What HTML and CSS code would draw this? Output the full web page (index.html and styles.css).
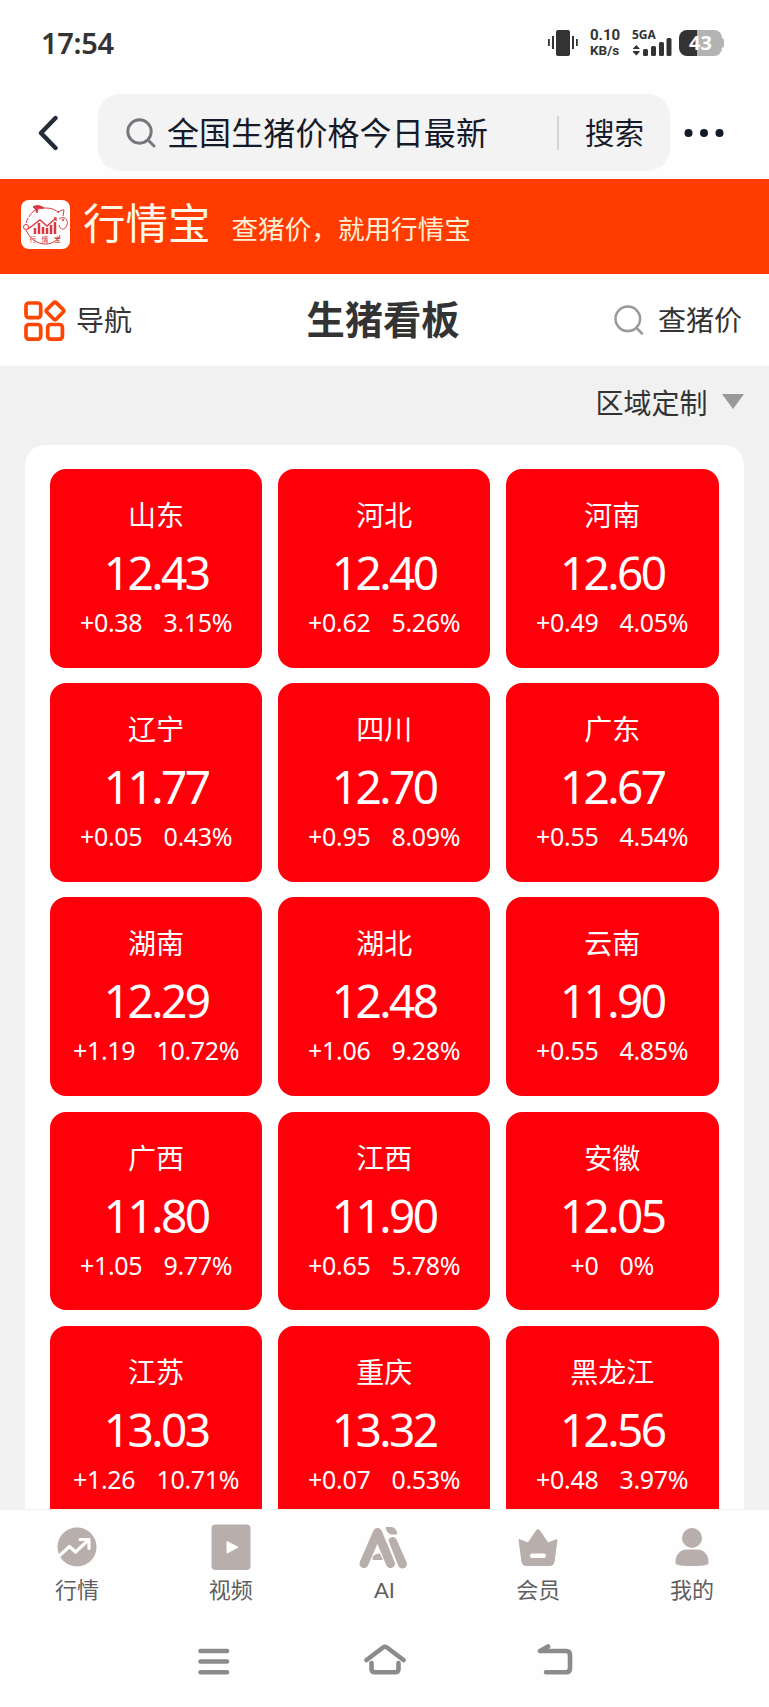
FILE: index.html
```html
<!DOCTYPE html>
<html lang="zh-CN">
<head>
  <meta charset="UTF-8" />
  <meta name="viewport" content="width=device-width, initial-scale=1.0"/>
  <title>生猪看板</title>
  <link rel="stylesheet" href="styles.css">
</head>
<body>
  <div class="status-bar">
    <span class="time">17:54</span>
    <svg class="vibrate" width="30" height="26" viewBox="0 0 30 26" fill="#333">
      <rect x="8" y="0" width="14" height="26" rx="2"/>
      <rect x="0" y="9" width="1.8" height="7"/><rect x="4" y="6" width="2" height="13"/>
      <rect x="24" y="6" width="2" height="13"/><rect x="28" y="9" width="1.8" height="7"/>
    </svg>
    <div class="speed"><span class="speed-num">0.10</span><span class="speed-unit">KB/s</span></div>
    <div class="signal">
      <span>5GA</span>
      <svg width="40" height="18" viewBox="0 0 40 18" fill="#333">
        <path d="M1 8 L4.3 4.5 L7.6 8 V8.6 H1Z M1 10.6 H7.6 V11.5 L4.3 15 L1 11.5Z" transform="translate(0 2.5)"/>
        <rect x="11" y="11" width="5" height="7" rx="1.5"/><rect x="19" y="8" width="5" height="10" rx="1.5"/>
        <rect x="27" y="4" width="5" height="14" rx="1.5"/><rect x="34.500" y="0" width="5" height="18" rx="1.5"/>
      </svg>
    </div>
    <div class="battery"><span>43</span></div>
  </div>

  <div class="search-bar">
    <svg class="back" width="20" height="36" viewBox="0 0 20 36" fill="none" stroke="#242c3a" stroke-width="4.4" stroke-linecap="round" stroke-linejoin="round"><path d="M17.500 3 L3 18 L17.500 33"/></svg>
    <div class="search-box">
      <svg class="search-icon" width="30" height="30" viewBox="0 0 30 30" fill="none" stroke="#75777d" stroke-width="2.9" stroke-linecap="round"><circle cx="13.500" cy="13.500" r="11.700"/><path d="M22 22 L28 28"/></svg>
      <span class="keyword">全国生猪价格今日最新</span>
      <span class="divider"></span>
      <span class="search-btn">搜索</span>
    </div>
    <svg class="more" width="40" height="10" viewBox="0 0 40 10" fill="#151a28"><circle cx="4.500" cy="5" r="4"/><circle cx="20" cy="5" r="4"/><circle cx="35.500" cy="5" r="4"/></svg>
  </div>

  <div class="banner">
    <div class="logo">
      <svg width="49" height="49" viewBox="0 0 49 49" fill="none" stroke="#db3941" stroke-width="1">
        <path d="M8 17 C11 10 18 8 25 8 C31 8 35 10 38 13 M5 30 C9 39 16 44 25 44 C32 44 38 39 39 35 M7 18 L5 23"/>
        <path d="M12 7 C15 5 19 5 23 8 L17 8 L16 13 C15 10 14 8 12 7Z" fill="#db3941"/>
        <path d="M36 12 C39 12 41 9 43 10 L42 16 M38 19 C43 15 48 20 46 25 C44 31 39 30 38 25"/>
        <circle cx="42" cy="20" r=".8"/><circle cx="5" cy="27" r="2.500"/>
        <path d="M7 29 L19 20 L26 26 L35 18 M33 18 H35 V21" stroke-width="1.400"/>
        <path d="M14 34 V28 M18 34 V23 M22 34 V27 M26 34 V28 M30 34 V25 M34 34 V22" stroke-width="2.500"/>
        <text x="8.500" y="41.500" class="logo-text">行</text><text x="20.500" y="41.500" class="logo-text">情</text><text x="33" y="41.500" class="logo-text">宝</text>
      </svg>
    </div>
    <span class="brand">行情宝</span>
    <span class="slogan">查猪价，就用行情宝</span>
  </div>

  <div class="nav">
    <div class="nav-left">
      <svg width="42" height="41" viewBox="0 0 42 41" fill="none" stroke="#ff4600" stroke-width="3.700">
        <rect x="2" y="3" width="14.700" height="14.700" rx="3"/>
        <rect x="2" y="24.500" width="14.700" height="14.700" rx="3"/>
        <rect x="23.700" y="24.500" width="14.700" height="14.700" rx="3"/>
        <rect x="24.300" y="4.200" width="13.400" height="13.400" rx="2" transform="rotate(45 31 10.900)"/>
      </svg>
      <span>导航</span>
    </div>
    <h1>生猪看板</h1>
    <div class="nav-right">
      <svg width="30" height="30" viewBox="0 0 30 30" fill="none" stroke="#999" stroke-width="2.500" stroke-linecap="round"><circle cx="13.800" cy="13.800" r="12.300"/><path d="M22.500 23 L28 28.500"/></svg>
      <span>查猪价</span>
    </div>
  </div>

  <div class="board">
    <div class="region">
      <span>区域定制</span>
      <i class="arrow"></i>
    </div>
    <div class="cards">
      <div class="card"><p class="name">山东</p><p class="price">12.43</p><p class="change"><span>+0.38</span><span>3.15%</span></p></div>
      <div class="card"><p class="name">河北</p><p class="price">12.40</p><p class="change"><span>+0.62</span><span>5.26%</span></p></div>
      <div class="card"><p class="name">河南</p><p class="price">12.60</p><p class="change"><span>+0.49</span><span>4.05%</span></p></div>
      <div class="card"><p class="name">辽宁</p><p class="price">11.77</p><p class="change"><span>+0.05</span><span>0.43%</span></p></div>
      <div class="card"><p class="name">四川</p><p class="price">12.70</p><p class="change"><span>+0.95</span><span>8.09%</span></p></div>
      <div class="card"><p class="name">广东</p><p class="price">12.67</p><p class="change"><span>+0.55</span><span>4.54%</span></p></div>
      <div class="card"><p class="name">湖南</p><p class="price">12.29</p><p class="change"><span>+1.19</span><span>10.72%</span></p></div>
      <div class="card"><p class="name">湖北</p><p class="price">12.48</p><p class="change"><span>+1.06</span><span>9.28%</span></p></div>
      <div class="card"><p class="name">云南</p><p class="price">11.90</p><p class="change"><span>+0.55</span><span>4.85%</span></p></div>
      <div class="card"><p class="name">广西</p><p class="price">11.80</p><p class="change"><span>+1.05</span><span>9.77%</span></p></div>
      <div class="card"><p class="name">江西</p><p class="price">11.90</p><p class="change"><span>+0.65</span><span>5.78%</span></p></div>
      <div class="card"><p class="name">安徽</p><p class="price">12.05</p><p class="change"><span>+0</span><span>0%</span></p></div>
      <div class="card"><p class="name">江苏</p><p class="price">13.03</p><p class="change"><span>+1.26</span><span>10.71%</span></p></div>
      <div class="card"><p class="name">重庆</p><p class="price">13.32</p><p class="change"><span>+0.07</span><span>0.53%</span></p></div>
      <div class="card"><p class="name">黑龙江</p><p class="price">12.56</p><p class="change"><span>+0.48</span><span>3.97%</span></p></div>
    </div>
  </div>

  <div class="tabs">
    <div class="tab">
      <svg width="50" height="46" viewBox="0 0 50 46"><circle cx="25" cy="23" r="19.500" fill="#b8aeab"/><path d="M6 33 L17.500 22.500 L23.500 28 L37 15.500 M28 15.500 H37 V24.500" fill="none" stroke="#fff" stroke-width="3.200" stroke-linecap="round" stroke-linejoin="round"/></svg>
      <span>行情</span>
    </div>
    <div class="tab">
      <svg width="50" height="46" viewBox="0 0 50 46"><rect x="5.500" y="0.500" width="39" height="45.500" rx="4" fill="#b8aeab"/><path d="M21 17.500 L32 23.300 L21 29Z" fill="#fff" stroke="#fff" stroke-linejoin="round"/></svg>
      <span>视频</span>
    </div>
    <div class="tab">
      <svg width="50" height="46" viewBox="0 0 50 46" fill="none" stroke="#b8aeab" stroke-width="9" stroke-linecap="round">
        <path d="M5 39.500 L18.500 8.500 L31.500 39.500" stroke-linejoin="round"/>
        <path d="M13.500 36 Q12.500 29.500 21 29.500 L24 36Z" fill="#b8aeab" stroke="none"/>
        <path d="M33.500 17.500 L43.500 40"/>
        <path d="M26 2.500 H32.500 Q38 3 39 11 H32 Q26.500 9 26 2.500Z" fill="#b8aeab" stroke="#fff" stroke-width="1"/>
        <path d="M27.500 13.500 L37.500 40" stroke="#fff" stroke-width="1.700"/>
      </svg>
      <span>AI</span>
    </div>
    <div class="tab">
      <svg width="50" height="46" viewBox="0 0 50 46"><path d="M6 15.500 L15 19 L23.500 6.500 Q25 4.500 26.500 6.500 L35 19 L44 15.500 L41 38 Q40.500 41.500 37 41.500 H13 Q9.500 41.500 9 38Z" fill="#b8aeab" stroke="#b8aeab" stroke-linejoin="round"/><rect x="17" y="29.500" width="16" height="4.500" rx="2.200" fill="#fff"/></svg>
      <span>会员</span>
    </div>
    <div class="tab">
      <svg width="50" height="46" viewBox="0 0 50 46" fill="#b8aeab"><circle cx="25" cy="14" r="10"/><path d="M8.500 38 C8.500 30 14 25.500 20 25.500 H30 C36 25.500 41.500 30 41.500 38 C41.500 41 40 42 25 42 C10 42 8.500 41 8.500 38Z"/></svg>
      <span>我的</span>
    </div>
  </div>

  <div class="system-keys">
    <svg width="42" height="34" viewBox="0 0 42 34"><path d="M7.500 7 H34 M7.500 17.500 H34 M7.500 28.300 H34"/></svg>
    <svg width="42" height="34" viewBox="0 0 42 34"><path d="M2.500 16 L19 3.500 Q21 2 23 3.500 L39.500 16 M7.500 19 V25 Q7.500 28.300 11 28.300 H31 Q34.500 28.300 34.500 25 V19"/></svg>
    <svg width="42" height="34" viewBox="0 0 42 34"><path d="M13 2.500 L5 7 H31 Q35 7 35 11 V24.300 Q35 28.300 31 28.300 H11"/></svg>
  </div>
</body>
</html>
```

FILE: styles.css
```css
* {
  box-sizing: border-box;
}

body {
  margin: 0;
  padding: 0;
  width: 769px;
  height: 1707px;
  overflow: hidden;
  display: flex;
  flex-direction: column;
  background-color: #fefefe;
  color: #333;
  font-family: Lato, "Noto Sans CJK SC", sans-serif;
}

h1, p {
  margin: 0;
}

svg {
  display: block;
  flex: none;
}

/* status bar */
.status-bar {
  display: flex;
  align-items: center;
  height: 86px;
  padding: 0 45px 0 41px;
}

.time {
  font-family: "Noto Sans", sans-serif;
  font-size: 29px;
  font-weight: 600;
  letter-spacing: -0.3px;
  margin-right: auto;
  padding-bottom: 2px;
}

.vibrate {
  margin-right: 12px;
}

.speed {
  display: flex;
  flex-direction: column;
  width: 31px;
  margin-right: 11px;
  font-family: Roboto, sans-serif;
  font-weight: bold;
  line-height: 15px;
}

.speed-num {
  font-size: 15px;
}

.speed-unit {
  font-size: 13.5px;
}

.signal {
  width: 40px;
  height: 26px;
  margin-right: 7px;
  font-family: "Noto Sans", sans-serif;
  font-size: 12px;
  font-weight: bold;
  line-height: 10px;
}

.signal span {
  display: block;
  height: 8px;
}

.battery {
  position: relative;
  width: 43px;
  height: 26px;
  border-radius: 8px;
  background: linear-gradient(to right, #333 18px, #b3b3b3 18px);
  color: #fff;
  font-family: "Noto Sans", sans-serif;
  font-size: 20px;
  font-weight: bold;
  line-height: 26px;
  text-align: center;
  margin-right: 2px;
}

.battery::after {
  content: "";
  position: absolute;
  right: -2px;
  top: 8px;
  width: 3px;
  height: 10px;
  border-radius: 0 3px 3px 0;
  background-color: #b3b3b3;
}

/* browser search */
.search-bar {
  display: flex;
  align-items: center;
  height: 93px;
  padding: 0 44px 0 38px;
}

.search-box {
  display: flex;
  align-items: center;
  width: 572px;
  height: 77px;
  margin: 0 14px 0 40px;
  padding-left: 28px;
  border-radius: 22px;
  background-color: #f3f3f3;
  color: #151a28;
}

.search-icon {
  margin-right: 11px;
}

.keyword {
  width: 390px;
  padding-bottom: 3px;
  font-size: 32px;
  letter-spacing: 0.1px;
}

.divider {
  width: 2px;
  height: 34px;
  margin-right: 26px;
  background-color: #d5d5d6;
}

.search-btn {
  padding-bottom: 3px;
  font-size: 29.5px;
}

/* app banner */
.banner {
  display: flex;
  align-items: center;
  height: 95px;
  padding: 0 21px;
  background-color: #ff3b00;
}

.logo {
  width: 49px;
  height: 49px;
  margin-top: -4px;
  border-radius: 8px;
  background-color: #fff;
}

.logo-text {
  font-size: 7px;
  fill: #db3941;
  stroke: none;
}

.brand {
  margin-left: 13px;
  margin-top: -13px;
  color: #fff9ec;
  font-size: 42.5px;
}

.slogan {
  margin-left: 21px;
  margin-top: 2px;
  color: #ffeed6;
  font-size: 26.6px;
}

/* page nav */
.nav {
  display: grid;
  grid-template-columns: 1fr auto 1fr;
  align-items: center;
  height: 92px;
  padding: 0 27px 0 24px;
  background-color: #fff;
  font-size: 28px;
}

.nav h1 {
  font-size: 38.3px;
  font-weight: bold;
  line-height: 60px;
  padding-bottom: 3px;
}

.nav-left, .nav-right {
  display: flex;
  align-items: center;
}

.nav-left span, .nav-right span {
  padding-bottom: 2px;
}

.nav-left {
  gap: 10px;
}

.nav-right {
  justify-content: flex-end;
  gap: 14px;
}

/* price board */
.board {
  flex: none;
  height: 1143px;
  padding: 0 25.5px 0 24.8px;
  overflow: hidden;
  background-color: #f1f1f1;
}

.region {
  display: flex;
  align-items: center;
  justify-content: flex-end;
  gap: 14px;
  height: 79px;
  padding-bottom: 8px;
  font-size: 28px;
}

.arrow {
  border: 11.5px solid transparent;
  border-top: 15.5px solid #999;
  border-bottom: 0;
}

.cards {
  display: grid;
  grid-template-columns: repeat(3, 1fr);
  gap: 15.4px;
  padding: 24.3px 25px;
  border-radius: 20px;
  background-color: #fff;
}

.card {
  display: flex;
  flex-direction: column;
  align-items: center;
  height: 198.7px;
  padding-top: 25px;
  border-radius: 16px;
  background-color: #ff000b;
  color: #fff;
}

.name {
  font-size: 28px;
  line-height: 42px;
}

.price {
  font-family: "Noto Sans", sans-serif;
  font-size: 46px;
  letter-spacing: -2.6px;
  line-height: 56px;
  margin-top: 8px;
}

.change {
  display: flex;
  gap: 21px;
  font-family: "Noto Sans", sans-serif;
  font-size: 25px;
  letter-spacing: -0.3px;
  line-height: 34px;
  margin-top: 5px;
}

/* bottom tabs */
.tabs {
  display: flex;
  height: 104px;
  padding-top: 14px;
  border-top: 1px solid #f1f1f1;
}

.tab {
  flex: 1;
  display: flex;
  flex-direction: column;
  align-items: center;
  color: #5f5f5f;
  font-size: 22px;
}

.tab span {
  margin-top: 4px;
  line-height: 32px;
}

.system-keys {
  display: flex;
  justify-content: center;
  gap: 129px;
  padding-top: 31px;
}

.system-keys svg {
  fill: none;
  stroke: #8b8b8b;
  stroke-width: 4.6;
  stroke-linecap: round;
  stroke-linejoin: round;
}
```
